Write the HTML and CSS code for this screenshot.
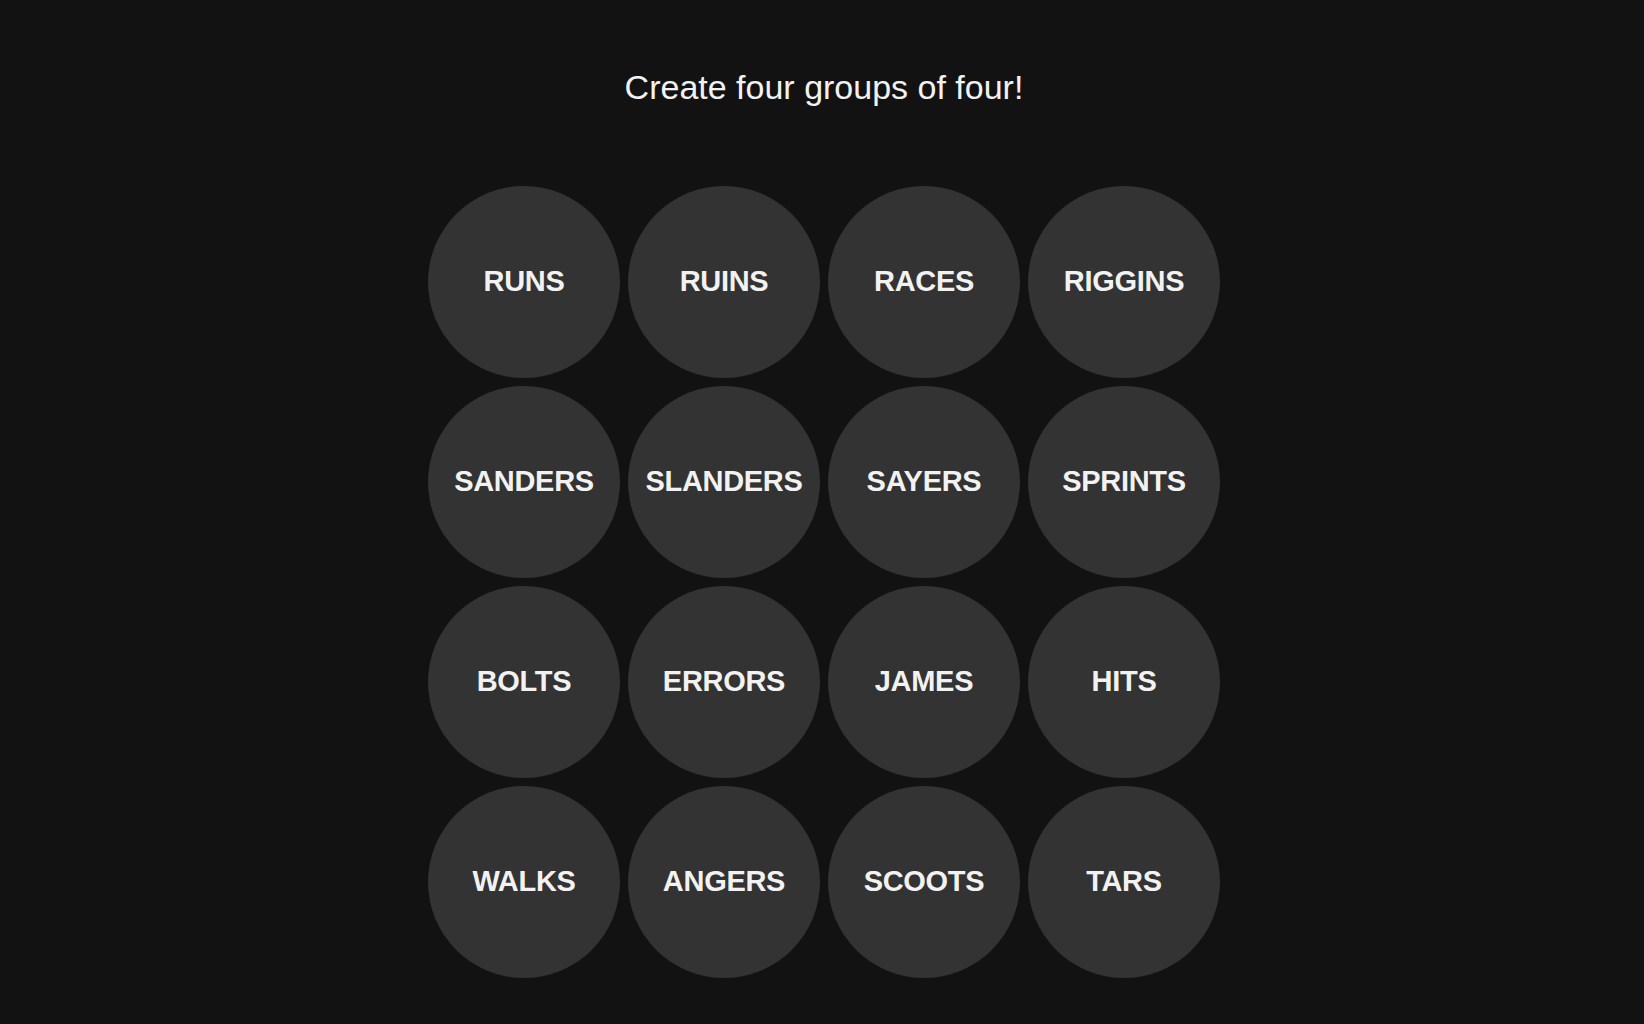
FILE: index.html
```html
<!DOCTYPE html>
<html lang="en">
<head>
    <meta charset="UTF-8">
    <meta name="viewport" content="width=device-width, initial-scale=1.0">
    <title>Connections</title>
    <link rel="stylesheet" href="styles.css">
</head>
<body>

    <div class="game">
        <h1 class="prompt">Create four groups of four!</h1>

        <div class="board">
            <button class="card">RUNS</button>
            <button class="card">RUINS</button>
            <button class="card">RACES</button>
            <button class="card">RIGGINS</button>

            <button class="card">SANDERS</button>
            <button class="card">SLANDERS</button>
            <button class="card">SAYERS</button>
            <button class="card">SPRINTS</button>

            <button class="card">BOLTS</button>
            <button class="card">ERRORS</button>
            <button class="card">JAMES</button>
            <button class="card">HITS</button>

            <button class="card">WALKS</button>
            <button class="card">ANGERS</button>
            <button class="card">SCOOTS</button>
            <button class="card">TARS</button>
        </div>
    </div>

</body>
</html>
```

FILE: styles.css
```css
/* General Styles */
body {
    font-family: 'Liberation Sans', Arial, sans-serif;
    background-color: #121212;
    color: #f2f2f2;
    margin: 0;
    padding: 0;
}

.game {
    padding-top: 67px;
    padding-left: 4px;
}

.prompt {
    margin: 0 0 79px;
    text-align: center;
    font-size: 34px;
    line-height: 40px;
    font-weight: 400;
    color: #f2f2f2;
}

/* Board */
.board {
    display: grid;
    grid-template-columns: repeat(4, 192px);
    grid-auto-rows: 192px;
    gap: 8px;
    justify-content: center;
}

.card {
    display: flex;
    align-items: center;
    justify-content: center;
    width: 192px;
    height: 192px;
    padding: 0 0 2px;
    border: none;
    border-radius: 50%;
    background-color: #333333;
    color: #f2f2f2;
    font-family: 'Liberation Sans', Arial, sans-serif;
    font-size: 29px;
    font-weight: 700;
    letter-spacing: -0.3px;
    cursor: pointer;
}

.card:hover {
    background-color: #3a3a3a;
}
```
